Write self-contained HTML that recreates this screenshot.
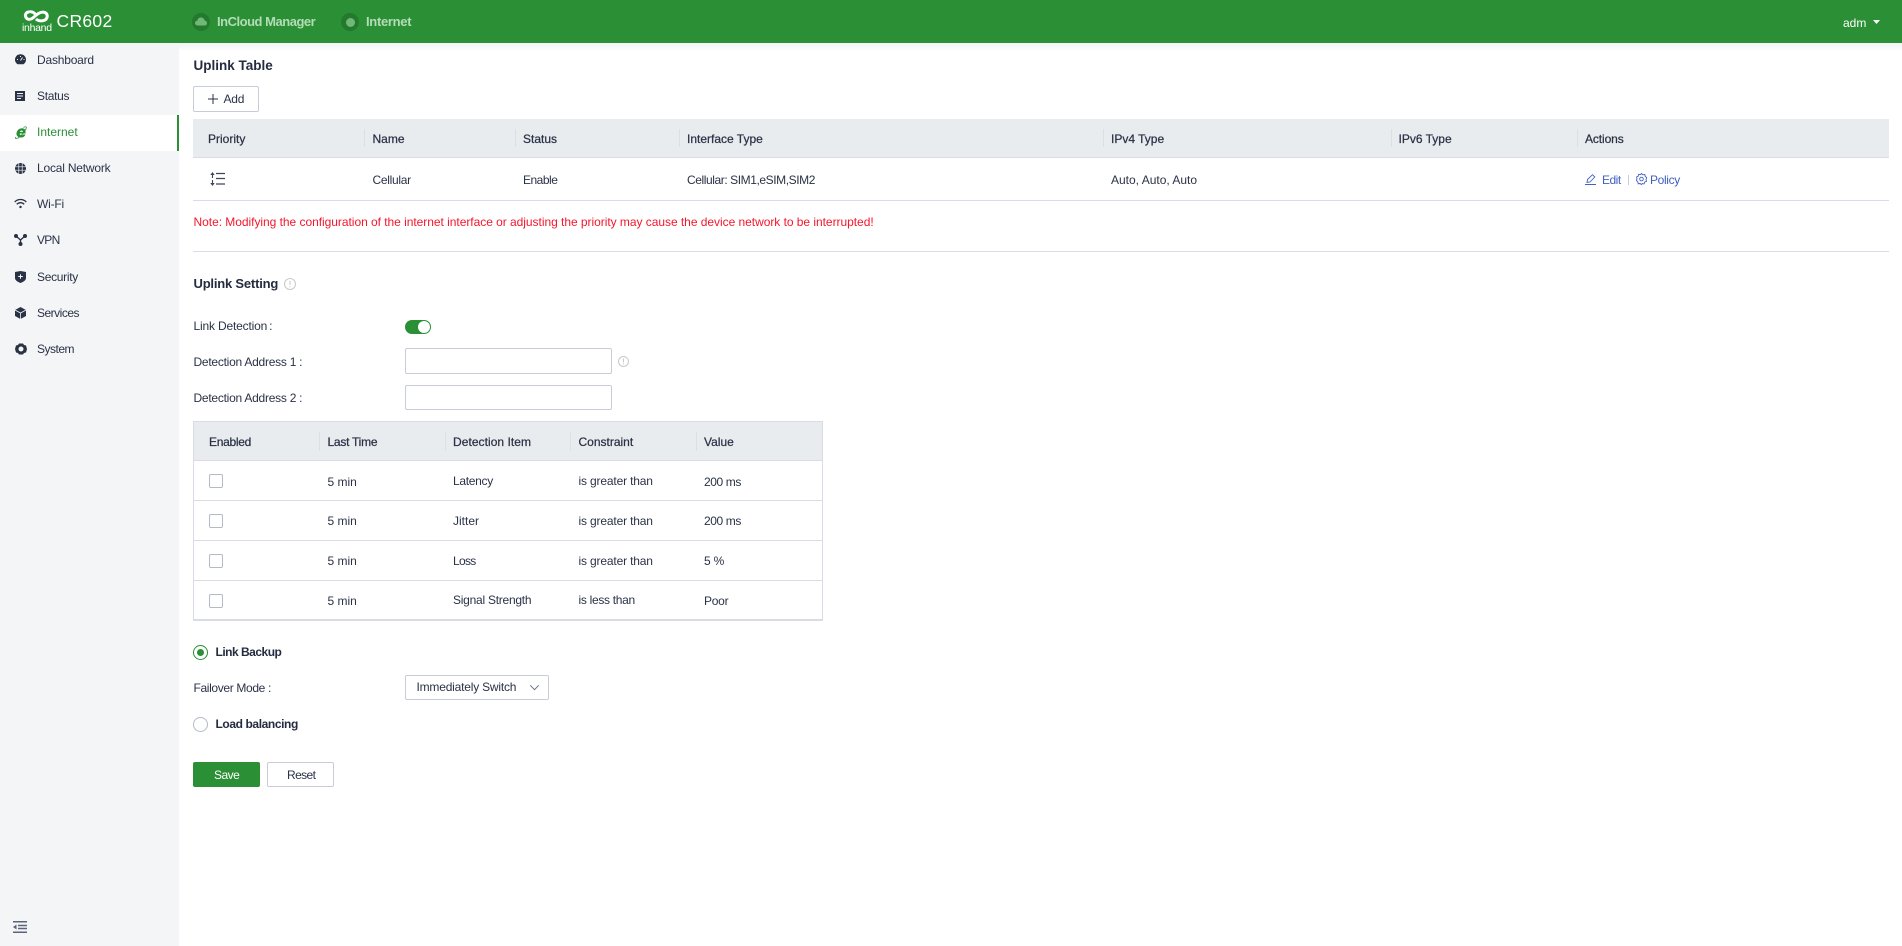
<!DOCTYPE html>
<html><head><meta charset="utf-8"><title>CR602</title>
<style>
html,body{margin:0;padding:0;width:1902px;height:946px;overflow:hidden;background:#fff}
body{font:12px "Liberation Sans",sans-serif;color:#2a3246;position:relative}
.t{position:absolute;white-space:nowrap;line-height:20px;height:20px}
.a{position:absolute;box-sizing:border-box}
.h{-webkit-text-stroke:.25px #2a3246;color:#2a3246}
.b{font-weight:bold;color:#252c3f}
svg{position:absolute;overflow:visible}
.ln{position:absolute;background:#d9dce6;height:1px}
.sep{position:absolute;width:1px;background:#dcdfe4}
.in{position:absolute;box-sizing:border-box;border:1px solid #c8ccd6;border-radius:2px;background:#fff}
.cb{position:absolute;box-sizing:border-box;width:14px;height:14px;border:1px solid #b5b9c4;border-radius:2px;background:#fff;left:209px}
</style></head><body>

<div class="a" style="left:0;top:43px;width:179px;height:903px;background:#f4f5f7"></div>
<div class="a" style="left:179px;top:43px;width:1723px;height:8px;background:linear-gradient(#f0f1f3,#fff)"></div>
<div class="a" style="left:0;top:115px;width:179px;height:36px;background:#fff;border-right:2px solid #2a8f35"></div>
<div class="a" style="left:0;top:0;width:1902px;height:43px;background:#2a8f35"></div>

<!-- logo -->
<svg style="left:0;top:0" width="60" height="30" viewBox="0 0 60 30"><path d="M29 12C26 12 24.500 15 26 17.500C27.500 20 31 20 34 17C37 14 41 11 45 12.500C48 14 48 18 45 20C42 21.500 38 21 36 19M29 12C32 11 34.500 13 36 15" fill="none" stroke="#fff" stroke-width="3"/></svg>
<div class="t" style="left:22px;top:18px;color:#fff;font-size:10.500px;letter-spacing:-.3px">inhand</div>
<div class="t" style="left:56.500px;top:11px;color:#fff;font-size:17.500px;letter-spacing:.3px">CR602</div>

<!-- top nav -->
<div class="a" style="left:192px;top:13px;width:18px;height:18px;border-radius:50%;background:#237a2e"></div>
<svg style="left:195px;top:17px" width="12" height="9" viewBox="0 0 12 9"><path d="M3 8.500C1 8.500 0 7.300 0 6C0 4.700 1 3.700 2.300 3.700C2.700 1.500 4.300.5 6 .5C7.900.5 9.300 1.800 9.600 3.500C11 3.700 12 4.800 12 6.100C12 7.500 11 8.500 9.500 8.500Z" fill="#6fb876"/></svg>
<div class="t" style="left:217px;top:12px;color:#b3dcb7;font-weight:bold;font-size:13px;letter-spacing:-.48px">InCloud Manager</div>
<div class="a" style="left:341px;top:13px;width:18px;height:18px;border-radius:50%;background:#237a2e"></div>
<div class="a" style="left:345.500px;top:17.500px;width:9px;height:9px;border-radius:50%;background:#6fb876"></div>
<div class="t" style="left:366px;top:12px;color:#b3dcb7;font-weight:bold;font-size:13px;letter-spacing:-.3px">Internet</div>
<div class="t" style="left:1843px;top:13px;color:#fff;font-size:12px">adm</div>
<svg style="left:1873px;top:20px" width="7" height="4" viewBox="0 0 7 4"><path d="M0 0H7L3.500 4Z" fill="#fff"/></svg>

<!-- sidebar -->
<svg style="left:15px;top:54px" width="11" height="11" viewBox="0 0 11 11"><path d="M5.500.2A5.400 5.400 0 0 0 1.400 9.200C1.900 9.800 2.500 10.300 3 10.300H8C8.600 10.300 9.100 9.800 9.600 9.200A5.400 5.400 0 0 0 5.500.2Z" fill="#2a3246"/><path d="M5.500 6.500L7.500 3.500M2 5.500H3M5.500 2V3M8.500 5.500H9.500" stroke="#f4f5f7" stroke-width="1"/></svg>
<div class="t" style="left:37px;top:50px;letter-spacing:-.2px">Dashboard</div>
<svg style="left:15px;top:91px" width="10" height="10" viewBox="0 0 10 10"><path d="M0 0H10V10H0Z" fill="#2a3246"/><path d="M2 2.500H8M2 5H8M2 7.500H6" stroke="#f4f5f7" stroke-width="1"/></svg>
<div class="t" style="left:37px;top:86px;letter-spacing:-.3px">Status</div>
<svg style="left:15px;top:126px" width="12" height="13" viewBox="0 0 12 13"><path d="M1 11C-.5 12.500 1 13 3 12C5 11 8.500 7.500 11 3C12 .5 10.500 .3 8.500 1.500" fill="none" stroke="#2a8f35" stroke-width=".8"/><path d="M1.500 7.200C2 4 4.500 2.300 7 2.300C9.800 2.300 11 4.300 10.500 7.500H4.700C4.700 9.500 7.300 9.800 8.300 8.500H10.500C9.500 11 7.500 11.800 5.500 11.500C2.800 11.200 1.200 9.500 1.500 7.200ZM4.900 5.900H8C8 4 5.200 4 4.900 5.900Z" fill="#2a8f35" fill-rule="evenodd"/></svg>
<div class="t" style="left:37px;top:122px;color:#2a8f35">Internet</div>
<svg style="left:15px;top:163px" width="11" height="11" viewBox="0 0 11 11"><circle cx="5.500" cy="5.500" r="5.500" fill="#2a3246"/><path d="M0 3.800H11M0 7.200H11M3.800 0V11M7.200 0V11" stroke="#f4f5f7" stroke-width=".7"/></svg>
<div class="t" style="left:37px;top:158px;letter-spacing:-.2px">Local Network</div>
<svg style="left:14px;top:199px" width="13" height="10" viewBox="0 0 13 10"><path d="M.7 3A8 8 0 0 1 12.300 3M2.800 5.300A5 5 0 0 1 10.200 5.300" fill="none" stroke="#2a3246" stroke-width="1.300"/><circle cx="6.500" cy="8" r="1.200" fill="#2a3246"/></svg>
<div class="t" style="left:37px;top:194px;letter-spacing:-.2px">Wi-Fi</div>
<svg style="left:14px;top:234px" width="13" height="12" viewBox="0 0 13 12"><path d="M2 2L6.500 6L11 2M6.500 6V10" stroke="#2a3246" stroke-width="1.400" fill="none"/><circle cx="2" cy="2" r="2" fill="#2a3246"/><circle cx="11" cy="2" r="2" fill="#2a3246"/><circle cx="6.500" cy="10" r="2" fill="#2a3246"/></svg>
<div class="t" style="left:37px;top:230px;letter-spacing:-.7px">VPN</div>
<svg style="left:15px;top:271px" width="11" height="12" viewBox="0 0 11 12"><path d="M0 1L5.500 0L11 1V7C11 9.500 8 11 5.500 12C3 11 0 9.500 0 7Z" fill="#2a3246"/><path d="M3.200 5.500H7.800M5.500 3.200V7.800" stroke="#f4f5f7" stroke-width="1"/></svg>
<div class="t" style="left:37px;top:267px;letter-spacing:-.3px">Security</div>
<svg style="left:15px;top:307px" width="11" height="12" viewBox="0 0 11 12"><path d="M5.500 0L11 3V9L5.500 12L0 9V3Z" fill="#2a3246"/><path d="M0 3L5.500 6L11 3M5.500 6V12" stroke="#f4f5f7" stroke-width=".8" fill="none"/></svg>
<div class="t" style="left:37px;top:303px;letter-spacing:-.5px">Services</div>
<svg style="left:15px;top:343px" width="12" height="12" viewBox="0 0 12 12"><path d="M4 .5H8L9 2L11 2.500L12 6L11 9.500L9 10L8 11.500H4L3 10L1 9.500L0 6L1 2.500L3 2Z" fill="#2a3246"/><circle cx="6" cy="6" r="2.500" fill="#f4f5f7"/></svg>
<div class="t" style="left:37px;top:339px;letter-spacing:-.5px">System</div>
<svg style="left:13px;top:921px" width="14" height="12" viewBox="0 0 14 12"><path d="M0 .8H14M5 4.500H14M5 7.500H14M0 11.200H14" stroke="#5c6478" stroke-width="1.500"/><path d="M3.500 3.500V8.500L0 6Z" fill="#5c6478"/></svg>

<!-- uplink table -->
<div class="t b" style="left:193.500px;top:56px;font-size:13.500px">Uplink Table</div>
<div class="in" style="left:193px;top:86px;width:66px;height:26px"></div>
<svg style="left:208px;top:94px" width="10" height="10" viewBox="0 0 10 10"><path d="M5 0V10M0 5H10" stroke="#2a3246" stroke-width="1"/></svg>
<div class="t" style="left:223.500px;top:89px;letter-spacing:-.2px">Add</div>

<div class="a" style="left:193px;top:119px;width:1696px;height:38px;background:#e9ecef"></div>
<div class="ln" style="left:193px;top:157px;width:1696px"></div>
<div class="ln" style="left:193px;top:200px;width:1696px"></div>
<div class="sep" style="left:364px;top:129px;height:18px"></div>
<div class="sep" style="left:515px;top:129px;height:18px"></div>
<div class="sep" style="left:679px;top:129px;height:18px"></div>
<div class="sep" style="left:1103px;top:129px;height:18px"></div>
<div class="sep" style="left:1391px;top:129px;height:18px"></div>
<div class="sep" style="left:1577px;top:129px;height:18px"></div>
<div class="t h" style="left:208px;top:129px">Priority</div>
<div class="t h" style="left:372.500px;top:129px">Name</div>
<div class="t h" style="left:523px;top:129px">Status</div>
<div class="t h" style="left:687px;top:129px">Interface Type</div>
<div class="t h" style="left:1111px;top:129px">IPv4 Type</div>
<div class="t h" style="left:1398.500px;top:129px">IPv6 Type</div>
<div class="t h" style="left:1585px;top:129px;letter-spacing:-.1px">Actions</div>

<svg style="left:210px;top:172px" width="15" height="14" viewBox="0 0 15 14"><path d="M6 1.500H15M6 6.500H15M6 12H15" stroke="#3f4657" stroke-width="1.300"/><path d="M2.500 1V6M2.500 8V13" stroke="#3f4657" stroke-width="1.100"/><path d="M2.500 0L4.700 3H.3ZM2.500 14L4.700 11H.3Z" fill="#3f4657"/></svg>
<div class="t" style="left:372.500px;top:170px;letter-spacing:-.3px">Cellular</div>
<div class="t" style="left:523px;top:170px;letter-spacing:-.5px">Enable</div>
<div class="t" style="left:687px;top:170px;letter-spacing:-.42px">Cellular: SIM1,eSIM,SIM2</div>
<div class="t" style="left:1111px;top:170px">Auto, Auto, Auto</div>
<svg style="left:1585px;top:174px" width="11" height="11" viewBox="0 0 11 11"><path d="M0 10.500H11M2 8.500L2.500 5.500L7.500 .7L9.800 3L5 8Z" fill="none" stroke="#4160c0" stroke-width=".9"/></svg>
<div class="t" style="left:1602px;top:170px;color:#4160c0;letter-spacing:-.5px">Edit</div>
<div class="sep" style="left:1628px;top:175px;height:10px;background:#c6cce0"></div>
<svg style="left:1636px;top:173px" width="11" height="12" viewBox="0 0 11 12"><path d="M5.500.5L6.800 1.800L8.800 1.500L9.300 3.500L10.700 4.600L10 6.500L10.500 8.300L8.800 9L8 11L6.500 10.500L5.500 11.500L4 10.500L2.200 10.800L1.800 8.700L.4 7.500L1 5.700L.6 4L2.200 3.200L2.600 1.400L4.500 1.700Z" fill="none" stroke="#4160c0" stroke-width=".9"/><circle cx="5.500" cy="6" r="1.800" fill="none" stroke="#4160c0" stroke-width=".9"/></svg>
<div class="t" style="left:1650px;top:170px;color:#4160c0;letter-spacing:-.35px">Policy</div>

<div class="t" style="left:193.500px;top:212px;color:#f5162c;letter-spacing:-.037px">Note: Modifying the configuration of the internet interface or adjusting the priority may cause the device network to be interrupted!</div>
<div class="ln" style="left:193px;top:251px;width:1696px"></div>

<!-- uplink setting -->
<div class="t b" style="left:193.500px;top:274px;font-size:13px;letter-spacing:-.2px">Uplink Setting</div>
<svg style="left:284px;top:278px" width="12" height="12" viewBox="0 0 12 12"><circle cx="6" cy="6" r="5.500" fill="none" stroke="#c9c9c9"/><path d="M6 2.800V7M6 8.200V9.200" stroke="#c9c9c9"/></svg>

<div class="t" style="left:193.500px;top:316px;letter-spacing:-.17px">Link Detection<span style="margin-left:2px">:</span></div>
<div class="a" style="left:405px;top:320px;width:26px;height:14px;border-radius:7px;background:#2a8f35"></div>
<div class="a" style="left:418px;top:321px;width:12px;height:12px;border-radius:50%;background:#fff"></div>
<div class="t" style="left:193.500px;top:352px;letter-spacing:-.25px">Detection Address 1<span style="margin-left:3px">:</span></div>
<div class="in" style="left:405px;top:348px;width:207px;height:26px"></div>
<svg style="left:618px;top:356px" width="11" height="11" viewBox="0 0 11 11"><circle cx="5.500" cy="5.500" r="5" fill="none" stroke="#c9c9c9"/><path d="M5.500 2.500V6.500M5.500 7.500V8.500" stroke="#c9c9c9"/></svg>
<div class="t" style="left:193.500px;top:388px;letter-spacing:-.25px">Detection Address 2<span style="margin-left:3px">:</span></div>
<div class="in" style="left:405px;top:385px;width:207px;height:25px"></div>

<!-- detection table -->
<div class="a" style="left:193px;top:421px;width:630px;height:200px;border:1px solid #d9dce6;border-bottom-width:2px"></div>
<div class="a" style="left:194px;top:422px;width:628px;height:38px;background:#e9ecef"></div>
<div class="ln" style="left:194px;top:460px;width:628px"></div>
<div class="ln" style="left:194px;top:500px;width:628px"></div>
<div class="ln" style="left:194px;top:540px;width:628px"></div>
<div class="ln" style="left:194px;top:580px;width:628px"></div>
<div class="sep" style="left:319px;top:432px;height:19px"></div>
<div class="sep" style="left:445px;top:432px;height:19px"></div>
<div class="sep" style="left:570px;top:432px;height:19px"></div>
<div class="sep" style="left:696px;top:432px;height:19px"></div>
<div class="t h" style="left:209px;top:432px;letter-spacing:-.3px">Enabled</div>
<div class="t h" style="left:327.500px;top:432px;letter-spacing:-.25px">Last Time</div>
<div class="t h" style="left:453px;top:432px;letter-spacing:.05px">Detection Item</div>
<div class="t h" style="left:578.500px;top:432px">Constraint</div>
<div class="t h" style="left:704px;top:432px">Value</div>

<div class="cb" style="top:474px"></div>
<div class="t" style="left:327.500px;top:472px">5 min</div>
<div class="t" style="left:453px;top:471px;letter-spacing:-.3px">Latency</div>
<div class="t" style="left:578.500px;top:471px;letter-spacing:-.16px">is greater than</div>
<div class="t" style="left:704px;top:472px;letter-spacing:-.4px">200 ms</div>

<div class="cb" style="top:514px"></div>
<div class="t" style="left:327.500px;top:511px">5 min</div>
<div class="t" style="left:453px;top:511px">Jitter</div>
<div class="t" style="left:578.500px;top:511px;letter-spacing:-.16px">is greater than</div>
<div class="t" style="left:704px;top:511px;letter-spacing:-.4px">200 ms</div>

<div class="cb" style="top:554px"></div>
<div class="t" style="left:327.500px;top:551px">5 min</div>
<div class="t" style="left:453px;top:551px;letter-spacing:-.7px">Loss</div>
<div class="t" style="left:578.500px;top:551px;letter-spacing:-.16px">is greater than</div>
<div class="t" style="left:704px;top:551px;letter-spacing:-.2px">5 %</div>

<div class="cb" style="top:594px"></div>
<div class="t" style="left:327.500px;top:591px">5 min</div>
<div class="t" style="left:453px;top:590px;letter-spacing:-.25px">Signal Strength</div>
<div class="t" style="left:578.500px;top:590px;letter-spacing:-.3px">is less than</div>
<div class="t" style="left:704px;top:591px;letter-spacing:-.25px">Poor</div>

<!-- radios -->
<div class="a" style="left:193px;top:645px;width:15px;height:15px;border-radius:50%;border:1px solid #2a8f35;background:#fff"></div>
<div class="a" style="left:197px;top:649px;width:7px;height:7px;border-radius:50%;background:#2a8f35"></div>
<div class="t b" style="left:215.500px;top:642px;letter-spacing:-.5px">Link Backup</div>
<div class="t" style="left:193.500px;top:678px;letter-spacing:-.35px">Failover Mode<span style="margin-left:3px">:</span></div>
<div class="in" style="left:405px;top:675px;width:144px;height:25px"></div>
<div class="t" style="left:416.500px;top:677px;letter-spacing:-.2px">Immediately Switch</div>
<svg style="left:530px;top:685px" width="9" height="5" viewBox="0 0 9 5"><path d="M.3 .3L4.500 4.700L8.700 .3" fill="none" stroke="#6b7280" stroke-width="1"/></svg>
<div class="a" style="left:193px;top:717px;width:15px;height:15px;border-radius:50%;border:1px solid #b5b9c4;background:#fff"></div>
<div class="t b" style="left:215.500px;top:714px;letter-spacing:-.4px">Load balancing</div>

<!-- buttons -->
<div class="a" style="left:193px;top:762px;width:67px;height:25px;background:#2a8f35;border-radius:2px"></div>
<div class="t" style="left:214px;top:765px;color:#fff;letter-spacing:-.5px">Save</div>
<div class="in" style="left:267px;top:762px;width:67px;height:25px"></div>
<div class="t" style="left:287px;top:765px;letter-spacing:-.6px">Reset</div>

</body></html>
